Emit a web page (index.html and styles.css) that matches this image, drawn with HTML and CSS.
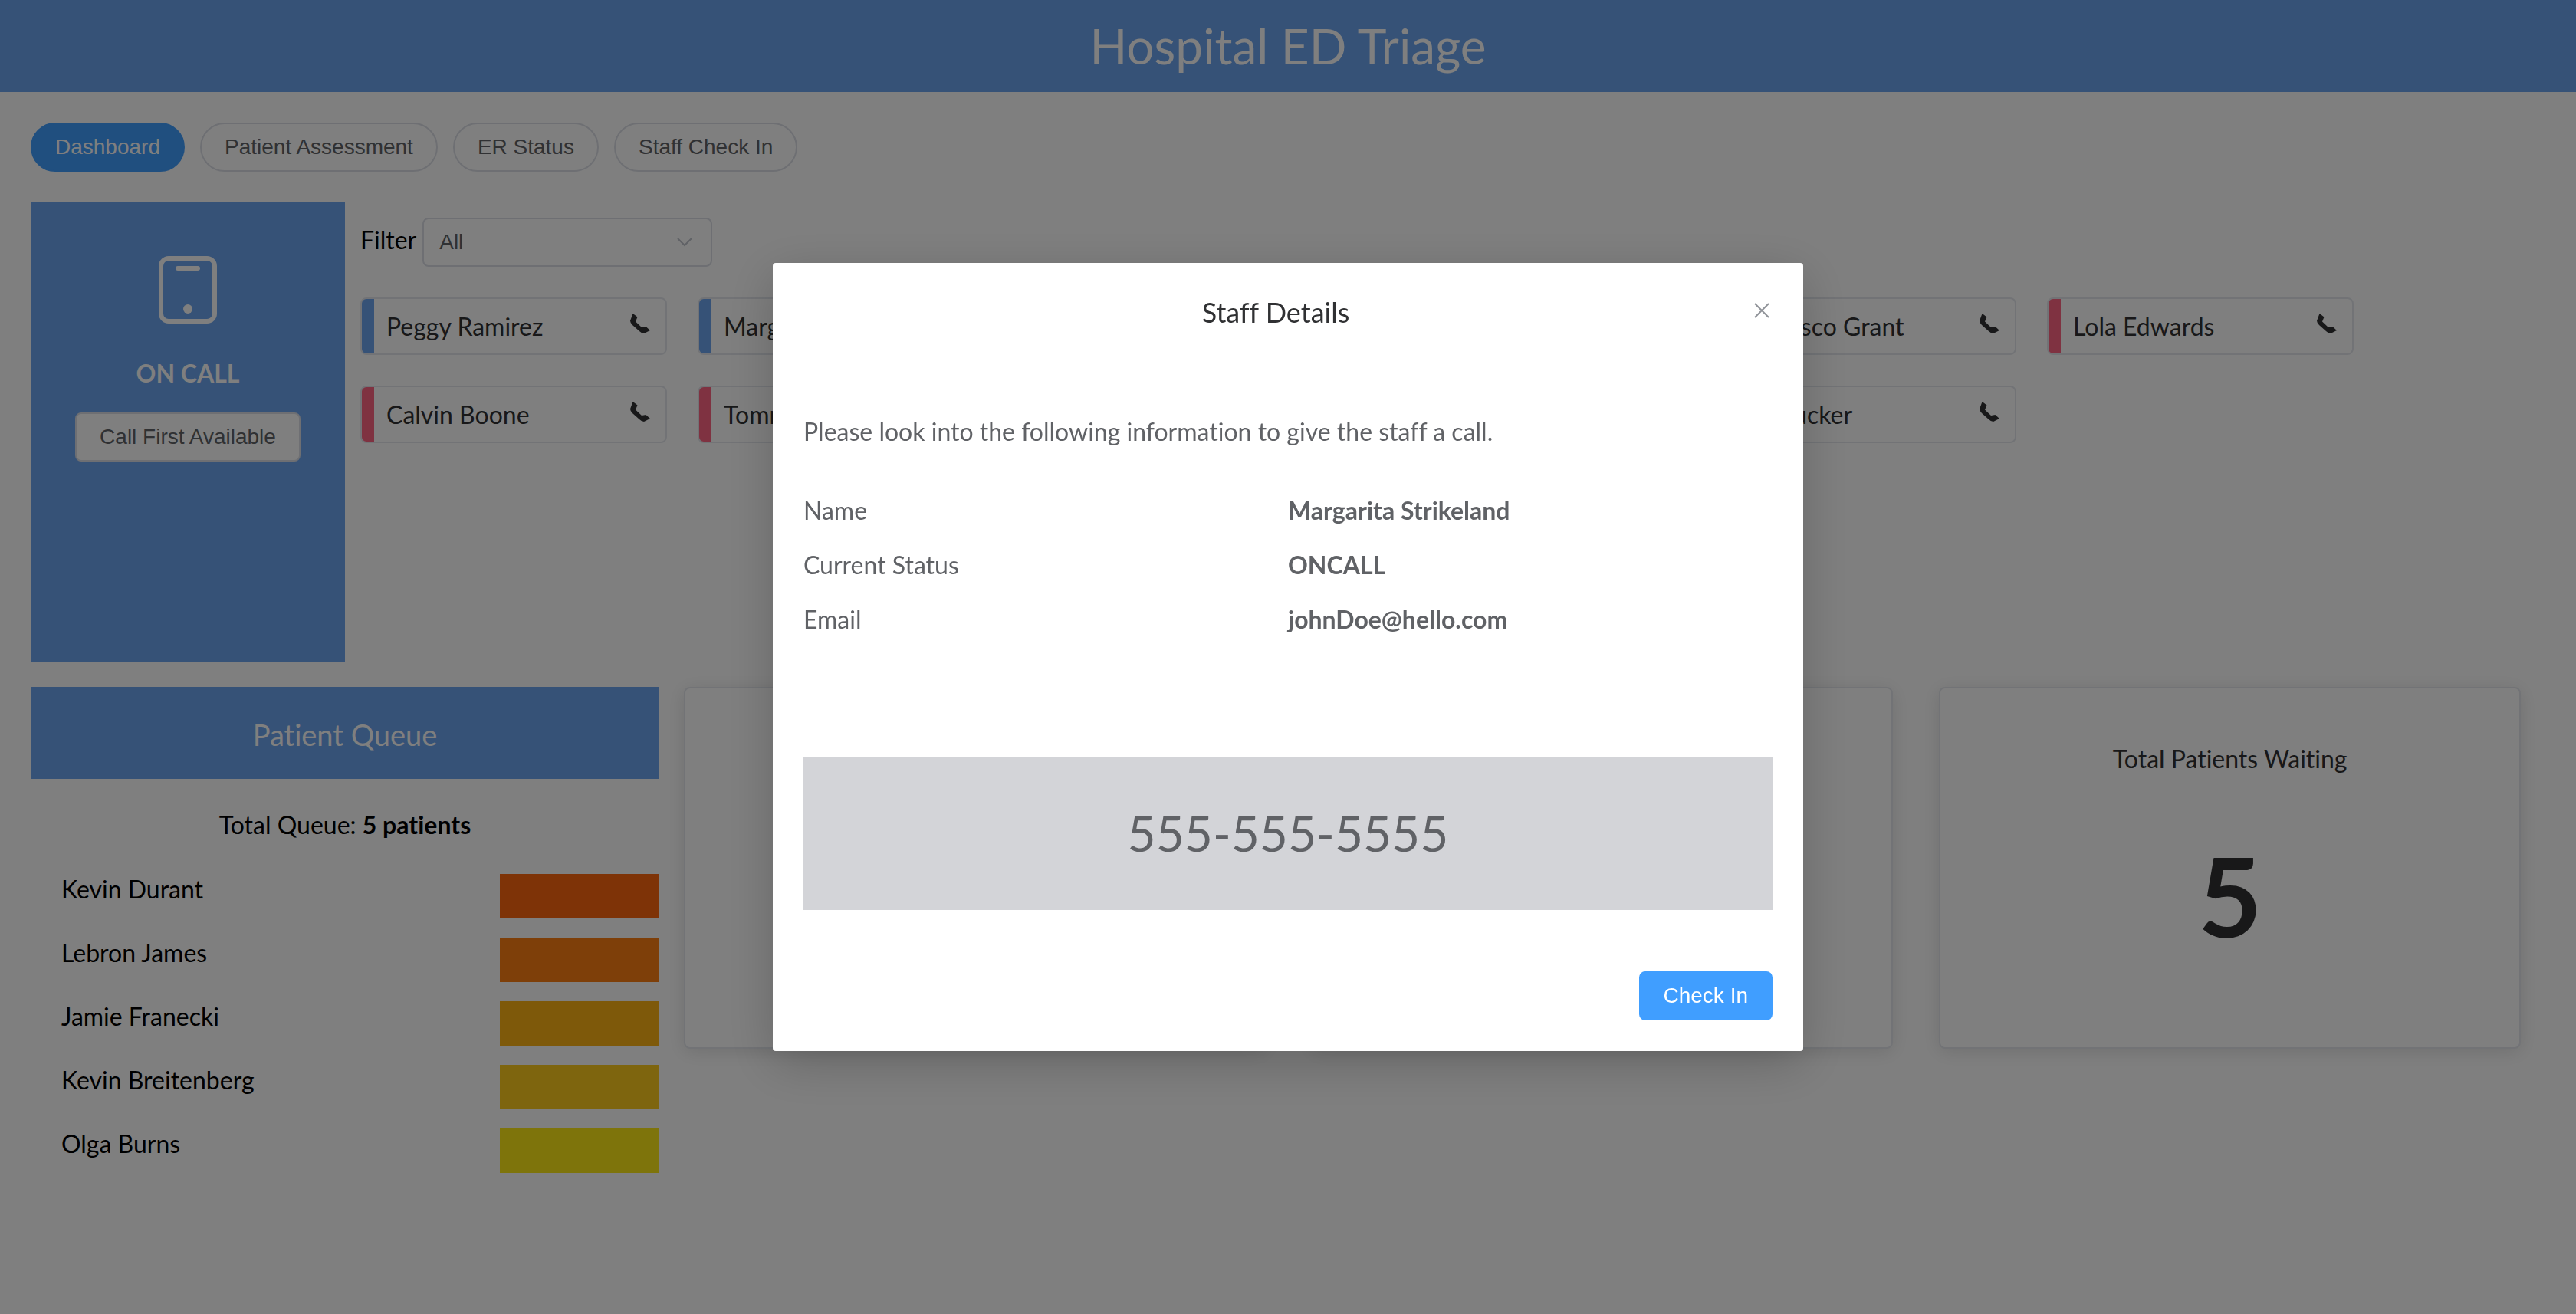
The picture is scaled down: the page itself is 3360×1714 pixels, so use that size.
FILE: index.html
```html
<!DOCTYPE html>
<html lang="en">
<head>
<meta charset="utf-8">
<title>Hospital ED Triage</title>
<link rel="stylesheet" href="styles.css">
</head>
<body>
<svg class="sprite" aria-hidden="true">
  <symbol id="phone" viewBox="0 0 26 26">
    <path d="M3.500 0 9.500 4.500 7 10.500 15 18 20.500 17 26 22 18 26Q15 26 12 23L3 15Q0 12 0 9.500Z"/>
  </symbol>
</svg>

<header class="topbar"><h1 class="topbar-title">Hospital ED Triage</h1></header>

<main class="page">
  <nav class="tabs">
    <button class="btn btn-round btn-primary" type="button">Dashboard</button>
    <button class="btn btn-round" type="button">Patient Assessment</button>
    <button class="btn btn-round" type="button">ER Status</button>
    <button class="btn btn-round" type="button">Staff Check In</button>
  </nav>

  <section class="oncall">
    <div class="oncall-panel">
      <svg class="oncall-icon" viewBox="0 0 76 88" aria-hidden="true">
        <rect x="3" y="3" width="70" height="82" rx="10" fill="none" stroke="currentColor" stroke-width="6"/>
        <rect x="22" y="13" width="32" height="6" rx="3" fill="currentColor"/>
        <circle cx="38" cy="69" r="6" fill="currentColor"/>
      </svg>
      <h2 class="oncall-title">ON CALL</h2>
      <button class="btn" type="button">Call First Available</button>
    </div>
    <div class="oncall-staff">
      <div class="filter">
        <label for="filter">Filter</label>
        <div class="select">
          <select id="filter"><option>All</option></select>
          <svg class="select-arrow" viewBox="0 0 20 12" aria-hidden="true"><path d="M1 1l9 9 9-9"/></svg>
        </div>
      </div>
      <ul class="staff">
        <li class="staff-card">Peggy Ramirez<button class="call" type="button" aria-label="Call"><svg><use href="#phone"/></svg></button></li>
        <li class="staff-card">Margarita Strikeland<button class="call" type="button" aria-label="Call"><svg><use href="#phone"/></svg></button></li>
        <li class="staff-card staff-card-fifth">Francisco Grant<button class="call" type="button" aria-label="Call"><svg><use href="#phone"/></svg></button></li>
        <li class="staff-card staff-card-off">Lola Edwards<button class="call" type="button" aria-label="Call"><svg><use href="#phone"/></svg></button></li>
        <li class="staff-card staff-card-off">Calvin Boone<button class="call" type="button" aria-label="Call"><svg><use href="#phone"/></svg></button></li>
        <li class="staff-card staff-card-off">Tommy<button class="call" type="button" aria-label="Call"><svg><use href="#phone"/></svg></button></li>
        <li class="staff-card staff-card-off staff-card-fifth">Roy Tucker<button class="call" type="button" aria-label="Call"><svg><use href="#phone"/></svg></button></li>
      </ul>
    </div>
  </section>

  <section class="overview">
    <div class="queue">
      <h2 class="queue-title">Patient Queue</h2>
      <p class="queue-total">Total Queue: <strong>5 patients</strong></p>
      <ul class="queue-list">
        <li class="queue-row">Kevin Durant<span class="level level-1"></span></li>
        <li class="queue-row">Lebron James<span class="level level-2"></span></li>
        <li class="queue-row">Jamie Franecki<span class="level level-3"></span></li>
        <li class="queue-row">Kevin Breitenberg<span class="level level-4"></span></li>
        <li class="queue-row">Olga Burns<span class="level level-5"></span></li>
      </ul>
    </div>
    <div class="stats">
      <article class="stat"></article>
      <article class="stat"></article>
      <article class="stat">
        <h3 class="stat-title">Total Patients Waiting</h3>
        <p class="stat-value">5</p>
      </article>
    </div>
  </section>
</main>

<div class="overlay">
  <section class="modal" role="dialog" aria-modal="true" aria-labelledby="modal-title">
    <header class="modal-header">
      <h2 class="modal-title" id="modal-title">Staff Details</h2>
      <button class="modal-close" type="button" aria-label="Close">
        <svg viewBox="0 0 20 20" aria-hidden="true"><path d="M1 1l18 18M19 1L1 19"/></svg>
      </button>
    </header>
    <div class="modal-body">
      <p class="modal-intro">Please look into the following information to give the staff a call.</p>
      <dl class="details">
        <dt>Name</dt><dd>Margarita Strikeland</dd>
        <dt>Current Status</dt><dd>ONCALL</dd>
        <dt>Email</dt><dd>johnDoe@hello.com</dd>
      </dl>
      <p class="modal-phone">555-555-5555</p>
    </div>
    <footer class="modal-footer">
      <button class="btn btn-primary" type="button">Check In</button>
    </footer>
  </section>
</div>
</body>
</html>
```

FILE: styles.css
```css
* { box-sizing: border-box; }

body {
  margin: 0;
  background: #fff;
  color: #000;
  font: 32px/39px Lato, "Liberation Sans", sans-serif;
  font-variant-ligatures: none;
}

h1, h2, h3, p, ul, dl, dd { margin: 0; padding: 0; font-weight: 400; }
ul { list-style: none; }
.sprite { display: none; }

.topbar {
  padding: 20px 40px;
  background: #6ca4ee;
  color: #fff;
  text-align: center;
}
.topbar-title { font-size: 64px; line-height: 80px; }

.page { padding: 40px; }

.btn {
  height: 64px;
  padding: 0 30px;
  border: 2px solid #dcdfe6;
  border-radius: 8px;
  background: #fff;
  color: #606266;
  font: 28px/28px "Liberation Sans", Arial, sans-serif;
  white-space: nowrap;
}
.btn-round { border-radius: 32px; }
.btn-primary { border-color: #409eff; background: #409eff; color: #fff; }

.tabs { display: flex; gap: 20px; margin-bottom: 40px; }

.oncall { display: flex; min-height: 600px; margin-bottom: 32px; }
.oncall-panel {
  display: flex;
  flex-direction: column;
  align-items: center;
  flex: 0 0 12.5%;
  padding-top: 70px;
  background: #6ca4ee;
  color: #fff;
}
.oncall-icon { width: 76px; height: 88px; }
.oncall-title { margin: 45px 0 32px; font-size: 32px; font-weight: 700; }
.oncall-staff { flex: 1; padding: 20px; }

.filter { display: flex; align-items: center; gap: 8px; margin-bottom: 40px; }
.filter label { padding-bottom: 8px; }
.select { display: flex; align-items: center; width: 378px; }
.select select {
  flex: 1;
  height: 64px;
  padding: 0 60px 0 20px;
  border: 2px solid #dcdfe6;
  border-radius: 8px;
  background: #fff;
  color: #606266;
  font: 28px/32px "Liberation Sans", Arial, sans-serif;
  appearance: none;
}
.select-arrow {
  width: 20px;
  height: 12px;
  margin: 0 26px 0 -46px;
  fill: none;
  stroke: #c0c4cc;
  stroke-width: 2;
  pointer-events: none;
}

.staff { display: grid; grid-template-columns: repeat(auto-fill, 400px); gap: 40px; }
.staff-card {
  display: flex;
  justify-content: space-between;
  padding: 16px 20px 16px 32px;
  border: 2px solid #e4e7ed;
  border-radius: 8px;
  background: linear-gradient(to right, #6ca4ee 16px, #fff 16px);
  color: #303133;
}
.staff-card-off { background: linear-gradient(to right, #ff6482 16px, #fff 16px); }
.staff-card-fifth { grid-column: 5; }
.call { height: 32px; padding: 0; border: 0; background: none; color: #303133; }
.call svg { display: block; width: 26px; height: 26px; fill: currentColor; }

.overview { display: flex; align-items: flex-start; }
.queue { flex: 0 0 25%; }
.queue-title {
  padding: 38px 0 34px;
  background: #6ca4ee;
  color: #fff;
  font-size: 38px;
  line-height: 48px;
  text-align: center;
}
.queue-total { margin: 40px 0 45px; text-align: center; }
.queue-list { display: flex; flex-direction: column; gap: 25px; }
.queue-row { display: flex; justify-content: space-between; padding-left: 40px; }
.level { width: 208px; height: 58px; }
.level-1 { background: #fc660f; }
.level-2 { background: #fc7f12; }
.level-3 { background: #fcb314; }
.level-4 { background: #fccb1c; }
.level-5 { background: #fce816; }

.stats {
  display: grid;
  grid-template-columns: repeat(3, 1fr);
  gap: 60px;
  flex: 1;
  padding: 0 32px;
}
.stat {
  min-height: 472px;
  padding: 72px 40px;
  border: 2px solid #e4e7ed;
  border-radius: 8px;
  background: #fff;
  box-shadow: 0 4px 24px rgba(0, 0, 0, 0.12);
  color: #303133;
  text-align: center;
}
.stat-title { font-size: 32px; }
.stat-value { margin-top: 72px; font-size: 144px; font-weight: 700; line-height: 173px; }

.overlay {
  position: fixed;
  inset: 0;
  overflow: auto;
  padding-top: 20vh;
  background: rgba(0, 0, 0, 0.5);
}
.modal {
  width: 40%;
  margin: 0 auto;
  border-radius: 4px;
  background: #fff;
  box-shadow: 0 16px 64px rgba(0, 0, 0, 0.2);
  color: #606266;
}
.modal-header { display: flex; padding: 40px 40px 20px; }
.modal-title { flex: 1; color: #303133; font-size: 36px; line-height: 48px; text-align: center; }
.modal-close { width: 32px; height: 44px; padding: 0; border: 0; background: none; }
.modal-close svg { display: block; width: 20px; height: 20px; margin: 0 4px 0 auto; stroke: #909399; stroke-width: 2; }
.modal-body { padding: 92px 40px 60px; }
.details {
  display: grid;
  grid-template-columns: 1fr 1fr;
  row-gap: 32px;
  padding: 64px 0 160px;
}
.details dd { font-weight: 700; }
.modal-phone {
  padding: 60px 0;
  background: #d3d4d8;
  font-size: 64px;
  line-height: 80px;
  text-align: center;
}
.modal-footer { padding: 20px 40px 40px; text-align: right; }
.modal-footer .btn { display: block; margin-left: auto; }
```
